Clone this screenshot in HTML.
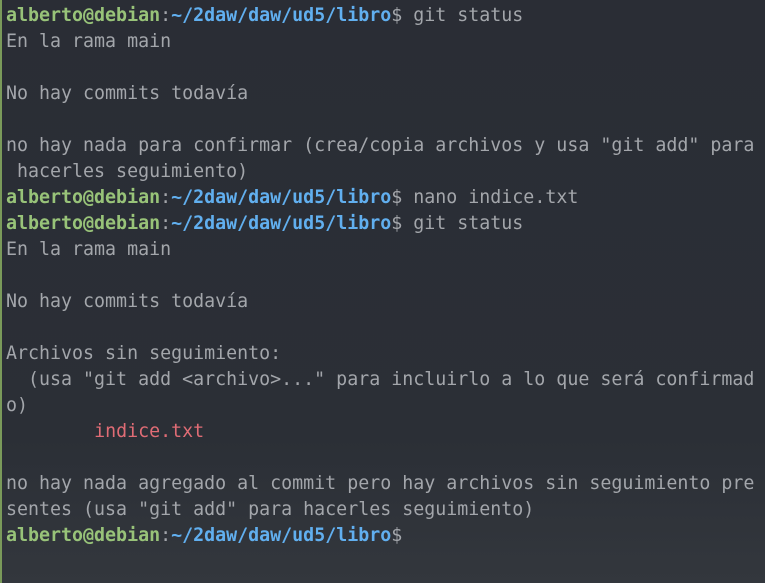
<html><head><style>
body{margin:0;width:765px;height:583px;overflow:hidden;background:linear-gradient(#2a2d35 0%,#2b2f36 75%,#33373d 100%);}
.l{position:absolute;left:0;top:0;width:2px;height:583px;background:#7a9a5a}
pre{margin:0;position:absolute;left:6px;top:3px;font-family:"DejaVu Sans Mono","Liberation Mono",monospace;font-size:18.3px;line-height:26px;color:#a3a6ab;letter-spacing:0}
.g{color:#98c379;font-weight:bold}.b{color:#61afef;font-weight:bold}.r{color:#e06c75}
</style></head><body><div class="l"></div><pre><span class="g">alberto@debian</span>:<span class="b">~/2daw/daw/ud5/libro</span>$ git status
En la rama main

No hay commits todavía

no hay nada para confirmar (crea/copia archivos y usa "git add" para
 hacerles seguimiento)
<span class="g">alberto@debian</span>:<span class="b">~/2daw/daw/ud5/libro</span>$ nano indice.txt
<span class="g">alberto@debian</span>:<span class="b">~/2daw/daw/ud5/libro</span>$ git status
En la rama main

No hay commits todavía

Archivos sin seguimiento:
  (usa "git add &lt;archivo&gt;..." para incluirlo a lo que será confirmad
o)
        <span class="r">indice.txt</span>

no hay nada agregado al commit pero hay archivos sin seguimiento pre
sentes (usa "git add" para hacerles seguimiento)
<span class="g">alberto@debian</span>:<span class="b">~/2daw/daw/ud5/libro</span>$</pre></body></html>
